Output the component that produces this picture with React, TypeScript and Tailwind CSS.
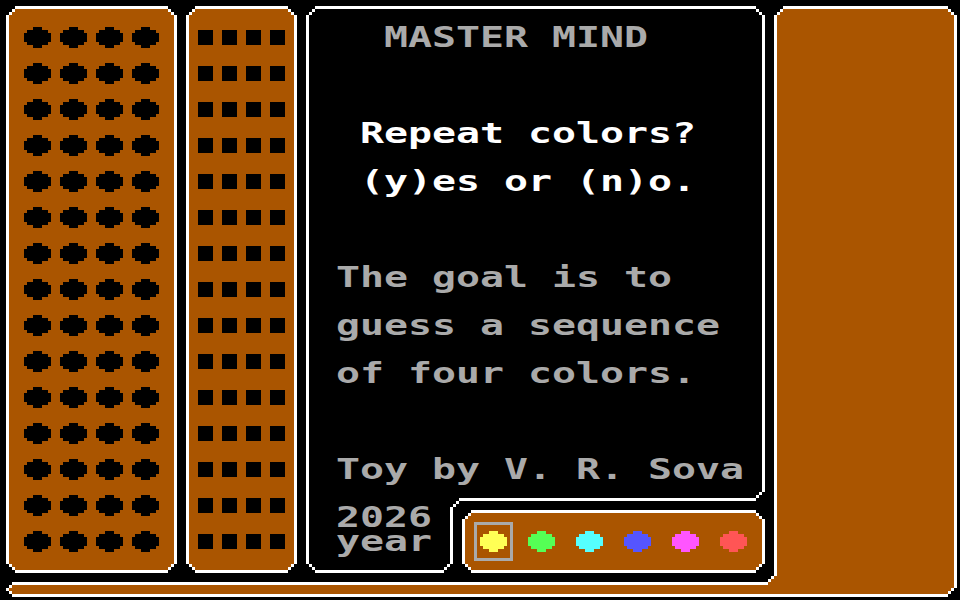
import React from "react";

const OUT =
  "[clip-path:polygon(9px_0,calc(100%_-_9px)_0,calc(100%_-_9px)_3px,calc(100%_-_6px)_3px,calc(100%_-_6px)_6px,calc(100%_-_3px)_6px,calc(100%_-_3px)_9px,100%_9px,100%_calc(100%_-_9px),calc(100%_-_3px)_calc(100%_-_9px),calc(100%_-_3px)_calc(100%_-_6px),calc(100%_-_6px)_calc(100%_-_6px),calc(100%_-_6px)_calc(100%_-_3px),calc(100%_-_9px)_calc(100%_-_3px),calc(100%_-_9px)_100%,9px_100%,9px_calc(100%_-_3px),6px_calc(100%_-_3px),6px_calc(100%_-_6px),3px_calc(100%_-_6px),3px_calc(100%_-_9px),0_calc(100%_-_9px),0_9px,3px_9px,3px_6px,6px_6px,6px_3px,9px_3px)]";

const IN =
  "[clip-path:polygon(9px_3px,calc(100%_-_9px)_3px,calc(100%_-_9px)_6px,calc(100%_-_6px)_6px,calc(100%_-_6px)_9px,calc(100%_-_3px)_9px,calc(100%_-_3px)_calc(100%_-_9px),calc(100%_-_6px)_calc(100%_-_9px),calc(100%_-_6px)_calc(100%_-_6px),calc(100%_-_9px)_calc(100%_-_6px),calc(100%_-_9px)_calc(100%_-_3px),9px_calc(100%_-_3px),9px_calc(100%_-_6px),6px_calc(100%_-_6px),6px_calc(100%_-_9px),3px_calc(100%_-_9px),3px_9px,6px_9px,6px_6px,9px_6px)]";

const OUT_C =
  "[clip-path:polygon(9px_0,450px_0,450px_3px,453px_3px,453px_6px,456px_6px,456px_9px,459px_9px,459px_486px,456px_486px,456px_489px,453px_489px,453px_492px,450px_492px,450px_495px,153px_495px,153px_498px,150px_498px,150px_501px,147px_501px,147px_558px,144px_558px,144px_561px,141px_561px,141px_564px,138px_564px,138px_567px,9px_567px,9px_564px,6px_564px,6px_561px,3px_561px,3px_558px,0_558px,0_9px,3px_9px,3px_6px,6px_6px,6px_3px,9px_3px)]";

const IN_C =
  "[clip-path:polygon(9px_3px,450px_3px,450px_6px,453px_6px,453px_9px,456px_9px,456px_486px,453px_486px,453px_489px,450px_489px,450px_492px,153px_492px,153px_495px,150px_495px,150px_498px,147px_498px,147px_501px,144px_501px,144px_558px,141px_558px,141px_561px,138px_561px,138px_564px,9px_564px,9px_561px,6px_561px,6px_558px,3px_558px,3px_9px,6px_9px,6px_6px,9px_6px)]";

const OUT_L =
  "[clip-path:polygon(777px_0,942px_0,942px_3px,945px_3px,945px_6px,948px_6px,948px_9px,951px_9px,951px_582px,948px_582px,948px_585px,945px_585px,945px_588px,942px_588px,942px_591px,6px_591px,6px_588px,3px_588px,3px_585px,0_585px,0_582px,3px_582px,3px_579px,6px_579px,6px_576px,762px_576px,762px_573px,765px_573px,765px_570px,768px_570px,768px_9px,771px_9px,771px_6px,774px_6px,774px_3px,777px_3px)]";

const IN_L =
  "[clip-path:polygon(777px_3px,942px_3px,942px_6px,945px_6px,945px_9px,948px_9px,948px_582px,945px_582px,945px_585px,942px_585px,942px_588px,6px_588px,6px_585px,3px_585px,3px_582px,6px_582px,6px_579px,762px_579px,762px_576px,765px_576px,765px_573px,768px_573px,768px_570px,771px_570px,771px_9px,774px_9px,774px_6px,777px_6px)]";

const OVAL = "M9 0H18V3H24V6H27V15H24V18H18V21H9V18H3V15H0V6H3V3H9Z";

function Oval({ color }: { color: string }) {
  return (
    <svg width="27" height="21" viewBox="0 0 27 21" shapeRendering="crispEdges" className="block">
      <path d={OVAL} fill={color} />
    </svg>
  );
}

function Frame({
  className,
  fill,
  children,
}: {
  className: string;
  fill: string;
  children?: React.ReactNode;
}) {
  return (
    <div className={"grid " + className}>
      <div className={"col-start-1 row-start-1 bg-white " + OUT} />
      <div className={"col-start-1 row-start-1 " + fill + " " + IN} />
      <div className="col-start-1 row-start-1 relative">{children}</div>
    </div>
  );
}

const TXT =
  "h-[24px] pt-[2px] text-[28px] leading-[24px] font-bold whitespace-pre origin-left scale-x-[1.424]";

const COLORS = ["#ffff55", "#55ff55", "#55ffff", "#5555ff", "#ff55ff", "#ff5555"];

export default function App() {
  const holes = Array.from({ length: 60 });
  return (
    <div className="w-[960px] h-[600px] bg-black overflow-hidden pt-[6px] pl-[6px] font-['DejaVu_Sans_Mono',monospace]">
      <div className="grid w-[951px] h-[591px]">
        {/* L-shaped frame: right panel + bottom bar */}
        <div className={"col-start-1 row-start-1 bg-white " + OUT_L} />
        <div className={"col-start-1 row-start-1 bg-[#aa5500] " + IN_L} />

        <div className="col-start-1 row-start-1 relative self-start flex gap-[9px] h-[567px]">
          {/* Guess holes */}
          <Frame className="w-[171px] h-[567px]" fill="bg-[#aa5500]">
            <div className="grid grid-cols-[repeat(4,27px)] gap-x-[9px] gap-y-[15px] pl-[18px] pt-[21px]">
              {holes.map((_, i) => (
                <Oval key={i} color="#000000" />
              ))}
            </div>
          </Frame>

          {/* Score pegs */}
          <Frame className="w-[111px] h-[567px]" fill="bg-[#aa5500]">
            <div className="grid grid-cols-[repeat(4,15px)] gap-x-[9px] gap-y-[21px] pl-[12px] pt-[24px]">
              {holes.map((_, i) => (
                <div key={i} className="w-[15px] h-[15px] bg-black" />
              ))}
            </div>
          </Frame>

          {/* Center screen */}
          <div className="grid w-[459px] h-[567px]">
            <div className={"col-start-1 row-start-1 bg-white " + OUT_C} />
            <div className={"col-start-1 row-start-1 bg-black " + IN_C} />
            <div className="col-start-1 row-start-1 relative flex flex-col pt-[18px] pl-[30px] text-[#aaaaaa]">
              <div className={TXT + " ml-[48px]"}>MASTER MIND</div>
              <div className={TXT + " ml-[24px] mt-[72px] text-white"}>Repeat colors?</div>
              <div className={TXT + " ml-[24px] mt-[24px] text-white"}>(y)es or (n)o.</div>
              <div className={TXT + " mt-[72px]"}>The goal is to</div>
              <div className={TXT + " mt-[24px]"}>guess a sequence</div>
              <div className={TXT + " mt-[24px]"}>of four colors.</div>
              <div className={TXT + " mt-[72px]"}>Toy by V. R. Sova</div>
              <div className={TXT + " mt-[24px]"}>2026</div>
              <div className={TXT}>year</div>
            </div>
            <Frame
              className="col-start-1 row-start-1 relative self-end justify-self-end w-[303px] h-[63px]"
              fill="bg-[#aa5500]"
            >
              <div className="flex items-center gap-[9px] pl-[12px] h-[63px]">
                {COLORS.map((c, i) => (
                  <div
                    key={c}
                    className={
                      i === 0
                        ? "w-[39px] h-[39px] flex items-center justify-center border-[3px] border-[#aaaaaa]"
                        : "w-[39px] h-[39px] flex items-center justify-center"
                    }
                  >
                    <Oval color={c} />
                  </div>
                ))}
              </div>
            </Frame>
          </div>
        </div>
      </div>
    </div>
  );
}
